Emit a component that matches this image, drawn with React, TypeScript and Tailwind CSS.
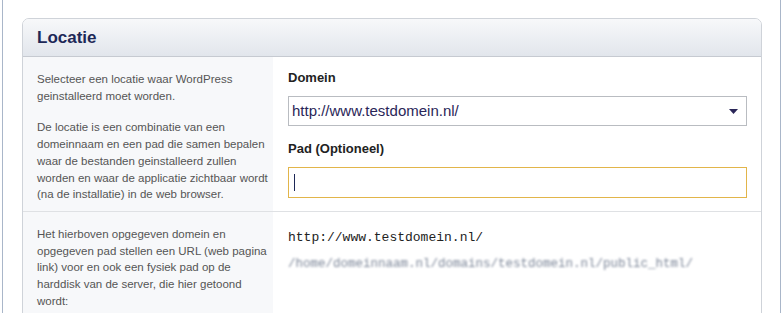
export default function App() {
  return (
    <div className="h-[313px] w-[784px] overflow-hidden bg-white font-['Liberation_Sans',Arial,sans-serif]">
      <div className="ml-[2px] mr-[3px] h-full border-x border-[#a9b6c9] pl-[19px] pr-[18px] pt-[18px]">
        <div className="overflow-hidden rounded-t-[7px] border border-[#cfd3d9] bg-white">
          <div className="flex h-[38px] items-center border-b border-[#c6cad1] bg-gradient-to-b from-[#f7f8fa] to-[#e2e6ec] px-[14px]">
            <h2 className="text-[17px] font-bold text-[#1d2857]">Locatie</h2>
          </div>

          <div className="flex border-b border-[#dfe1e4]">
            <div className="w-[250px] shrink-0 bg-[#f7f8fa] pl-[14px] pt-[14px] pb-[8px] text-[11.5px] leading-[16.7px] text-[#555]">
              <p>Selecteer een locatie waar WordPress geinstalleerd moet worden.</p>
              <p className="mt-[15px]">
                De locatie is een combinatie van een domeinnaam en een pad die samen bepalen waar de bestanden
                geinstalleerd zullen worden en waar de applicatie zichtbaar wordt (na de installatie) in de web browser.
              </p>
            </div>
            <div className="flex-1 pl-[15px] pr-[14px] pt-[12px]">
              <label className="block text-[13px] leading-[18px] font-bold text-[#222]">Domein</label>
              <div className="mt-[9px] flex h-[30px] items-center justify-between border border-[#b9bcc1] pl-[3px] pr-[8px]">
                <span className="text-[15px] text-[#2a2658]">http://www.testdomein.nl/</span>
                <svg width="9" height="5" viewBox="0 0 9 5">
                  <path d="M0 0H9L4.5 5Z" fill="#2a2658" />
                </svg>
              </div>
              <label className="mt-[14px] block text-[13px] leading-[18px] font-bold text-[#222]">Pad (Optioneel)</label>
              <div className="mt-[9px] flex h-[31px] items-center border border-[#e2b54a] pl-[5px]">
                <span className="h-[17px] w-px bg-[#1d2857]" />
              </div>
            </div>
          </div>

          <div className="flex">
            <div className="w-[250px] shrink-0 bg-[#f7f8fa] pl-[14px] pt-[14px] pb-[10px] text-[11.5px] leading-[16.7px] text-[#555]">
              <p>
                Het hierboven opgegeven domein en opgegeven pad stellen een URL (web pagina link) voor en ook een fysiek
                pad op de harddisk van de server, die hier getoond wordt:
              </p>
            </div>
            <div className="flex-1 pl-[15px] pt-[18px]">
              <p className="font-['Liberation_Mono','Courier_New',monospace] text-[13px] leading-[16px] text-[#222]">
                http://www.testdomein.nl/
              </p>
              <p className="mt-[11px] font-['Liberation_Mono','Courier_New',monospace] text-[12.5px] leading-[14px] text-[#7d8799] blur-[1px]">
                /home/domeinnaam.nl/domains/testdomein.nl/public_html/
              </p>
            </div>
          </div>
        </div>
      </div>
    </div>
  );
}
